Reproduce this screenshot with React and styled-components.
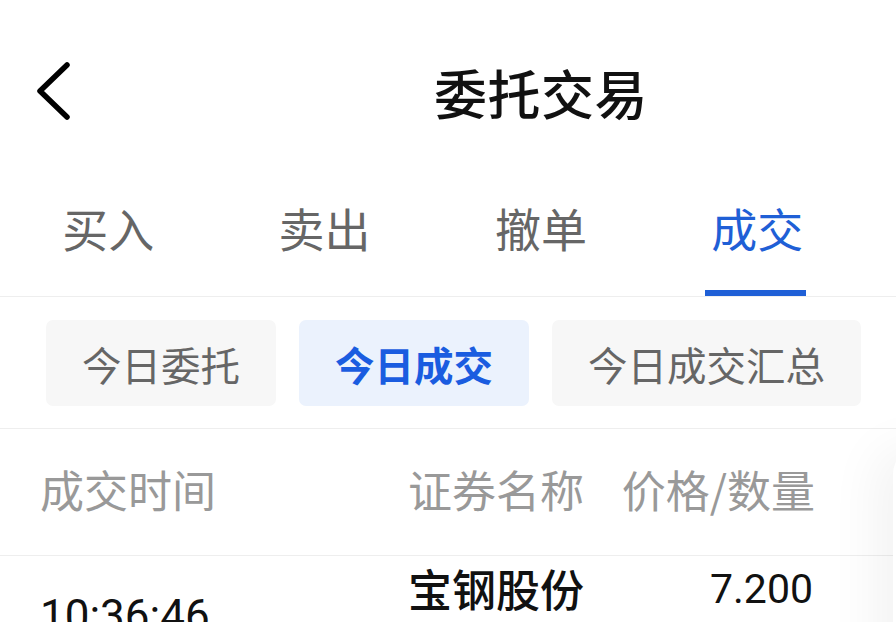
import React, { useState } from 'react'
import styled, { createGlobalStyle } from 'styled-components'

const GlobalStyle = createGlobalStyle`
  body {
    margin: 0;
    overflow: hidden;
    background: #fff;
    font-family: "Roboto", "Noto Sans CJK SC", sans-serif;
  }
`

const Page = styled.div`
  position: relative;
  width: 896px;
  height: 622px;
  overflow: hidden;
  background: #fff;
`

// header is centred on the full 1082px screen, of which we see the left part
const Header = styled.div`
  display: grid;
  grid-template-columns: 1fr auto 1fr;
  align-items: center;
  width: 1082px;
  height: 184px;
`

const BackBtn = styled.div`
  display: flex;
  align-items: center;
  padding-left: 34px;
  cursor: pointer;
`

const Title = styled.h1`
  margin: 0;
  font-family: "Noto Sans CJK SC", sans-serif;
  font-size: 53px;
  font-weight: 500;
  color: #111;
  letter-spacing: 0.5px;
`

const TabBar = styled.div`
  display: flex;
  height: 112px;
  border-bottom: 1px solid #eeeeee;
`

const Tab = styled.div`
  width: 216.4px;
  flex-shrink: 0;
  position: relative;
  display: flex;
  align-items: center;
  justify-content: center;
  padding-bottom: 27px;
  font-family: "Noto Sans CJK SC", sans-serif;
  font-size: 46px;
  color: ${p => (p.$active ? '#1f5fd6' : '#666')};
  cursor: pointer;

  &::after {
    content: '';
    display: ${p => (p.$active ? 'block' : 'none')};
    position: absolute;
    bottom: 0;
    left: 50%;
    width: 101px;
    height: 6px;
    margin-left: -52px;
    background: #1f5fd6;
  }
`

const SubTabs = styled.div`
  display: flex;
  gap: 23px;
  padding: 23px 46px 22px;
  border-bottom: 1px solid #eeeeee;
`

const SubTab = styled.div`
  flex-shrink: 0;
  height: 86px;
  padding: 0 36px;
  display: flex;
  align-items: center;
  white-space: nowrap;
  border-radius: 7px;
  font-family: "Noto Sans CJK SC", sans-serif;
  font-size: 39.5px;
  font-weight: ${p => (p.$active ? 700 : 400)};
  color: ${p => (p.$active ? '#1a5ce0' : '#666')};
  background: ${p => (p.$active ? '#ebf2fd' : '#f7f7f7')};
  cursor: pointer;
`

const Row = styled.div`
  display: grid;
  grid-template-columns: 368px 212px 195px;
  padding-left: 40px;
  border-bottom: ${p => (p.$head ? '1px solid #eeeeee' : 'none')};
  height: ${p => (p.$head ? '126px' : 'auto')};
  align-items: ${p => (p.$head ? 'center' : 'start')};
`

const HeadCell = styled.div`
  margin-top: -6px;
  font-family: "Noto Sans CJK SC", sans-serif;
  font-size: 44px;
  color: #999;
  text-align: ${p => (p.$right ? 'right' : 'left')};
  white-space: nowrap;
`

const Cell = styled.div`
  display: flex;
  flex-direction: column;
  align-items: ${p => (p.$right ? 'flex-end' : 'flex-start')};
  padding-top: ${p => p.$top || 0}px;
  padding-right: ${p => (p.$right ? 2 : 0)}px;
`

const Name = styled.div`
  font-family: "Noto Sans CJK SC", sans-serif;
  font-size: 44px;
  font-weight: 500;
  color: #111;
  line-height: 64px;
  white-space: nowrap;
`

const Num = styled.div`
  font-family: "Roboto", sans-serif;
  font-size: ${p => p.$size || 41}px;
  color: #111;
  line-height: 64px;
  white-space: nowrap;
`

const SidePanel = styled.div`
  position: absolute;
  left: 893px;
  top: 448px;
  width: 300px;
  height: 400px;
  background: #fff;
  border-top-left-radius: 26px;
  box-shadow: -18px 0 50px rgba(0, 0, 0, 0.05);
`

const tabs = ['买入', '卖出', '撤单', '成交']
const subTabs = ['今日委托', '今日成交', '今日成交汇总']

export default function App() {
  const [tab, setTab] = useState(3)
  const [sub, setSub] = useState(1)

  return (
    <Page>
      <GlobalStyle />
      <Header>
        <BackBtn>
          <svg width="40" height="60" viewBox="0 0 40 60">
            <polyline points="33,8 6,34 33,60" fill="none" stroke="#000" strokeWidth="5.5" strokeLinecap="round" strokeLinejoin="round" transform="translate(0,-5)" />
          </svg>
        </BackBtn>
        <Title>委托交易</Title>
        <div />
      </Header>

      <TabBar>
        {tabs.map((t, i) => (
          <Tab key={t} $active={i === tab} onClick={() => setTab(i)}>{t}</Tab>
        ))}
      </TabBar>

      <SubTabs>
        {subTabs.map((t, i) => (
          <SubTab key={t} $active={i === sub} onClick={() => setSub(i)}>{t}</SubTab>
        ))}
      </SubTabs>

      <Row $head>
        <HeadCell>成交时间</HeadCell>
        <HeadCell>证券名称</HeadCell>
        <HeadCell $right>价格/数量</HeadCell>
      </Row>

      <Row>
        <Cell $top={28}>
          <Num $size={44}>10:36:46</Num>
        </Cell>
        <Cell $top={0}>
          <Name>宝钢股份</Name>
        </Cell>
        <Cell $right $top={1}>
          <Num>7.200</Num>
        </Cell>
      </Row>

      <SidePanel />
    </Page>
  )
}
